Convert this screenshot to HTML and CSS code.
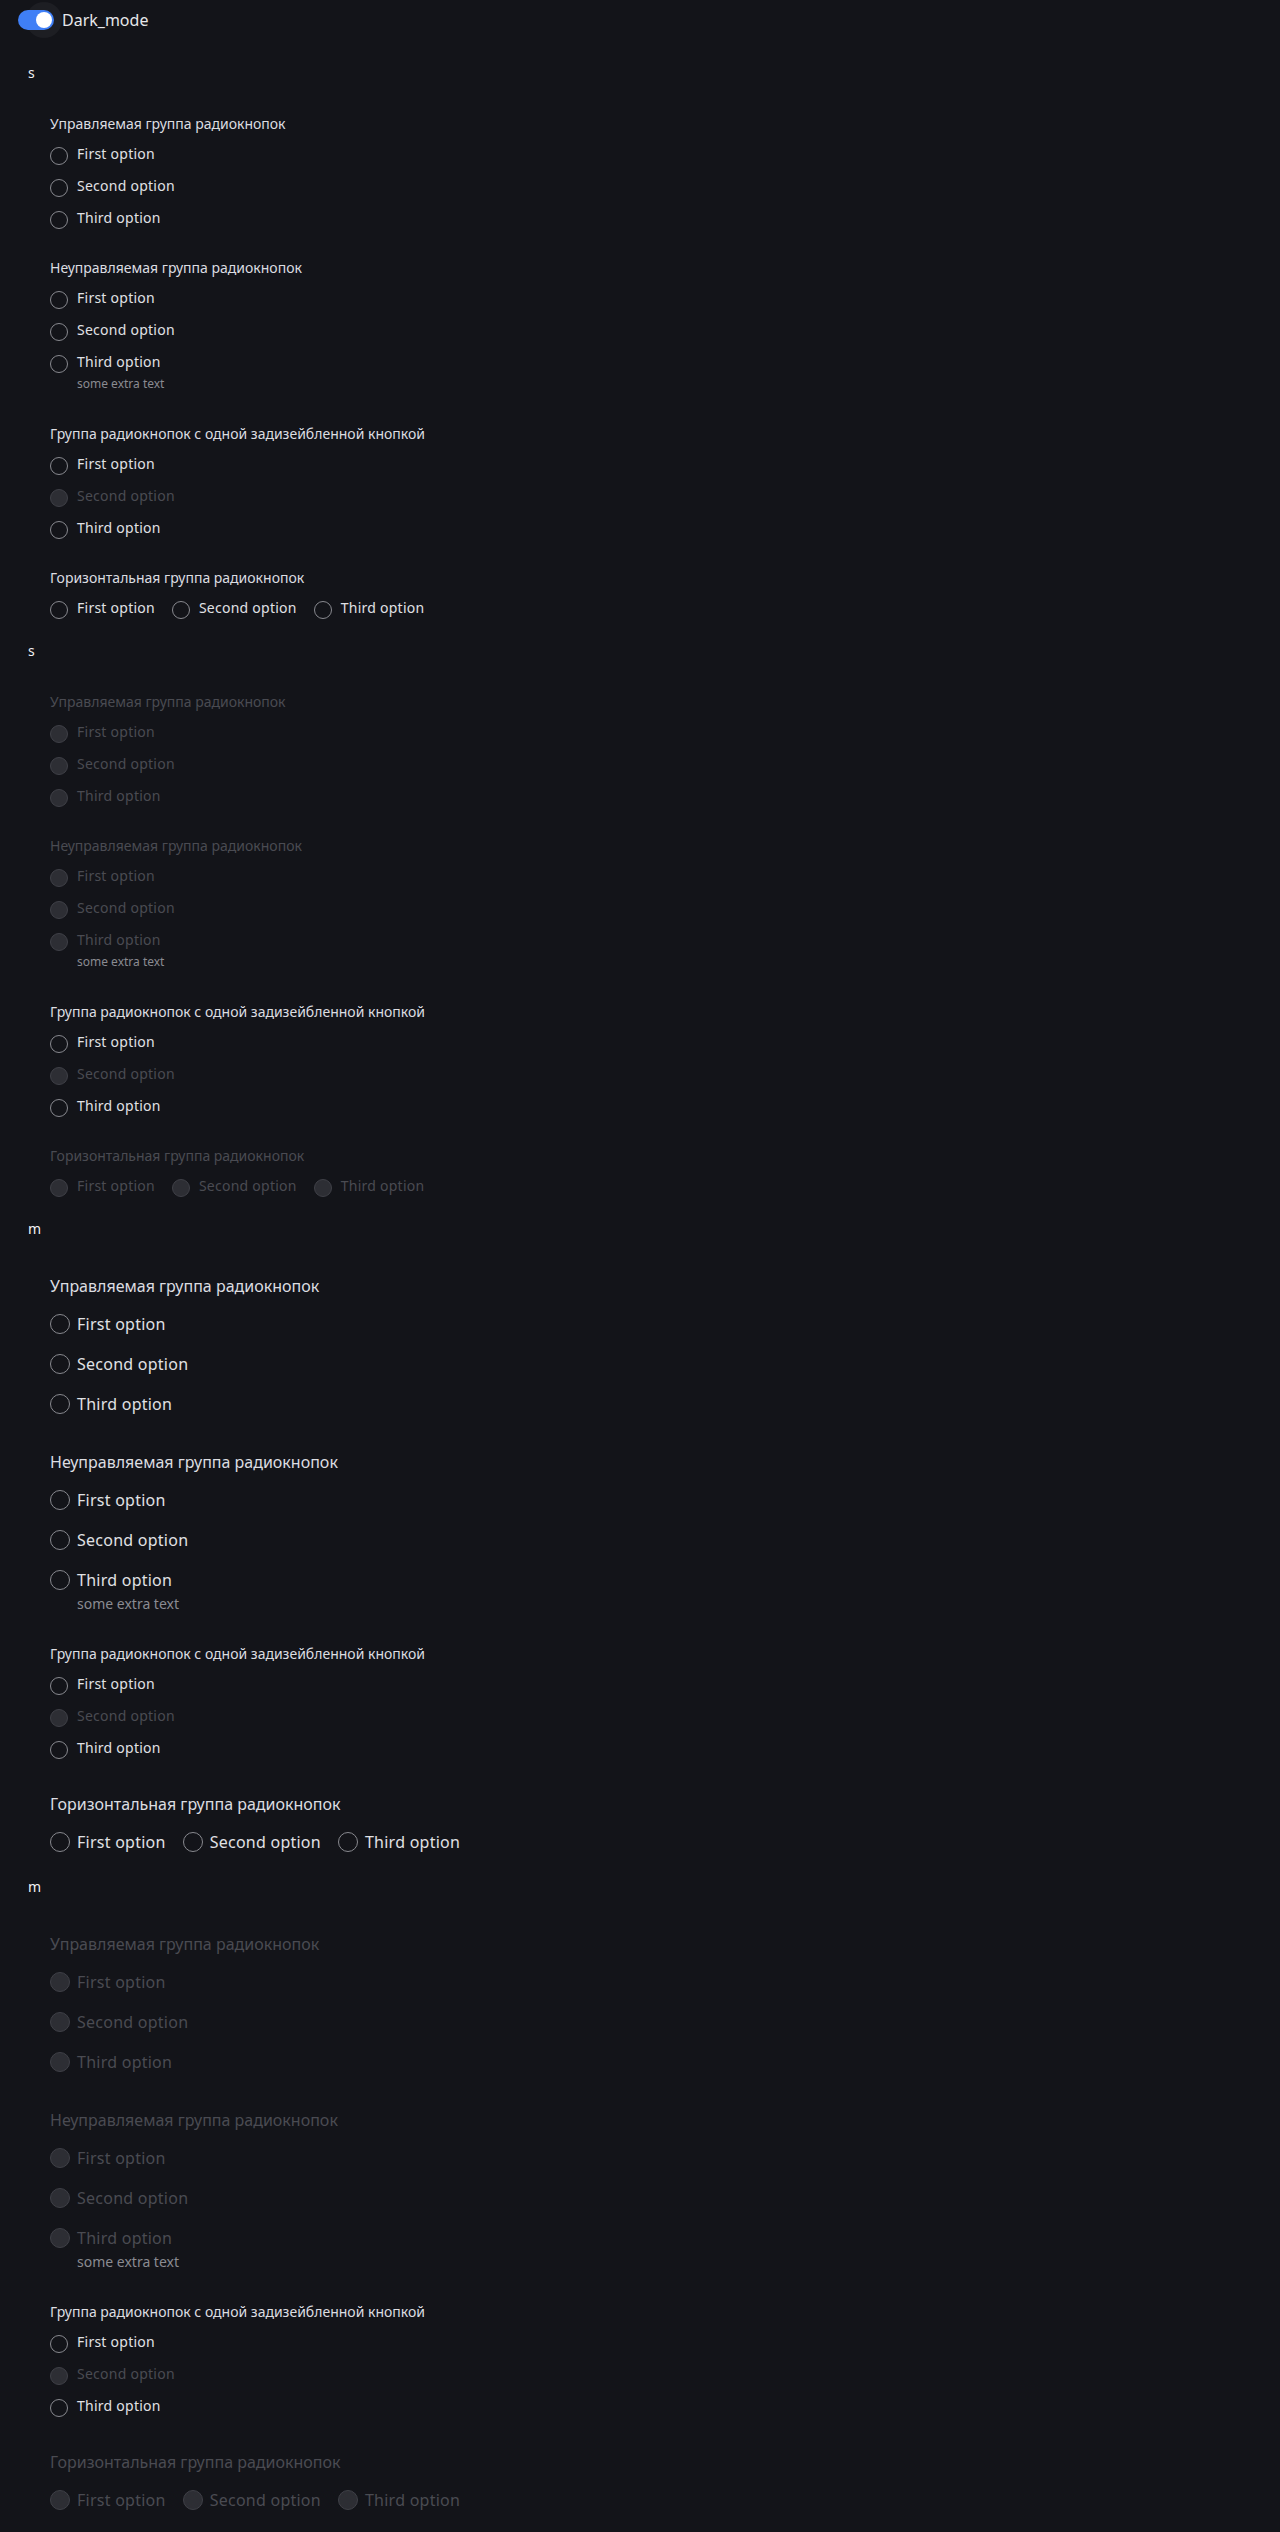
FILE: index.html
```html
<!DOCTYPE html>
<html lang="ru">
<head>
<meta charset="utf-8">
<title>Radio groups</title>
<link rel="stylesheet" href="styles.css">
</head>
<body>
<div class="toggle-row">
  <span class="switch"><span class="halo"></span><span class="track"></span><span class="knob"></span></span>
  <span class="switch-label">Dark_mode</span>
</div>

<!-- s, enabled -->
<section class="section size-s">
  <div class="section-title">s</div>
  <div class="group">
    <div class="group-label">Управляемая группа радиокнопок</div>
    <div class="options">
      <div class="option"><span class="radio"></span><div class="opt-body"><div class="opt-text">First option</div></div></div>
      <div class="option"><span class="radio"></span><div class="opt-body"><div class="opt-text">Second option</div></div></div>
      <div class="option"><span class="radio"></span><div class="opt-body"><div class="opt-text">Third option</div></div></div>
    </div>
  </div>
  <div class="group">
    <div class="group-label">Неуправляемая группа радиокнопок</div>
    <div class="options">
      <div class="option"><span class="radio"></span><div class="opt-body"><div class="opt-text">First option</div></div></div>
      <div class="option"><span class="radio"></span><div class="opt-body"><div class="opt-text">Second option</div></div></div>
      <div class="option"><span class="radio"></span><div class="opt-body"><div class="opt-text">Third option</div><div class="extra">some extra text</div></div></div>
    </div>
  </div>
  <div class="group">
    <div class="group-label">Группа радиокнопок с одной задизейбленной кнопкой</div>
    <div class="options">
      <div class="option"><span class="radio"></span><div class="opt-body"><div class="opt-text">First option</div></div></div>
      <div class="option disabled"><span class="radio"></span><div class="opt-body"><div class="opt-text">Second option</div></div></div>
      <div class="option"><span class="radio"></span><div class="opt-body"><div class="opt-text">Third option</div></div></div>
    </div>
  </div>
  <div class="group">
    <div class="group-label">Горизонтальная группа радиокнопок</div>
    <div class="options horizontal">
      <div class="option"><span class="radio"></span><div class="opt-body"><div class="opt-text">First option</div></div></div>
      <div class="option"><span class="radio"></span><div class="opt-body"><div class="opt-text">Second option</div></div></div>
      <div class="option"><span class="radio"></span><div class="opt-body"><div class="opt-text">Third option</div></div></div>
    </div>
  </div>
</section>

<!-- s, disabled -->
<section class="section size-s">
  <div class="section-title">s</div>
  <div class="group is-disabled">
    <div class="group-label">Управляемая группа радиокнопок</div>
    <div class="options">
      <div class="option disabled"><span class="radio"></span><div class="opt-body"><div class="opt-text">First option</div></div></div>
      <div class="option disabled"><span class="radio"></span><div class="opt-body"><div class="opt-text">Second option</div></div></div>
      <div class="option disabled"><span class="radio"></span><div class="opt-body"><div class="opt-text">Third option</div></div></div>
    </div>
  </div>
  <div class="group is-disabled">
    <div class="group-label">Неуправляемая группа радиокнопок</div>
    <div class="options">
      <div class="option disabled"><span class="radio"></span><div class="opt-body"><div class="opt-text">First option</div></div></div>
      <div class="option disabled"><span class="radio"></span><div class="opt-body"><div class="opt-text">Second option</div></div></div>
      <div class="option disabled"><span class="radio"></span><div class="opt-body"><div class="opt-text">Third option</div><div class="extra">some extra text</div></div></div>
    </div>
  </div>
  <div class="group">
    <div class="group-label">Группа радиокнопок с одной задизейбленной кнопкой</div>
    <div class="options">
      <div class="option"><span class="radio"></span><div class="opt-body"><div class="opt-text">First option</div></div></div>
      <div class="option disabled"><span class="radio"></span><div class="opt-body"><div class="opt-text">Second option</div></div></div>
      <div class="option"><span class="radio"></span><div class="opt-body"><div class="opt-text">Third option</div></div></div>
    </div>
  </div>
  <div class="group is-disabled">
    <div class="group-label">Горизонтальная группа радиокнопок</div>
    <div class="options horizontal">
      <div class="option disabled"><span class="radio"></span><div class="opt-body"><div class="opt-text">First option</div></div></div>
      <div class="option disabled"><span class="radio"></span><div class="opt-body"><div class="opt-text">Second option</div></div></div>
      <div class="option disabled"><span class="radio"></span><div class="opt-body"><div class="opt-text">Third option</div></div></div>
    </div>
  </div>
</section>

<!-- m, enabled -->
<section class="section size-m">
  <div class="section-title">m</div>
  <div class="group">
    <div class="group-label">Управляемая группа радиокнопок</div>
    <div class="options">
      <div class="option"><span class="radio"></span><div class="opt-body"><div class="opt-text">First option</div></div></div>
      <div class="option"><span class="radio"></span><div class="opt-body"><div class="opt-text">Second option</div></div></div>
      <div class="option"><span class="radio"></span><div class="opt-body"><div class="opt-text">Third option</div></div></div>
    </div>
  </div>
  <div class="group">
    <div class="group-label">Неуправляемая группа радиокнопок</div>
    <div class="options">
      <div class="option"><span class="radio"></span><div class="opt-body"><div class="opt-text">First option</div></div></div>
      <div class="option"><span class="radio"></span><div class="opt-body"><div class="opt-text">Second option</div></div></div>
      <div class="option"><span class="radio"></span><div class="opt-body"><div class="opt-text">Third option</div><div class="extra">some extra text</div></div></div>
    </div>
  </div>
  <div class="group group-small">
    <div class="group-label">Группа радиокнопок с одной задизейбленной кнопкой</div>
    <div class="options">
      <div class="option"><span class="radio"></span><div class="opt-body"><div class="opt-text">First option</div></div></div>
      <div class="option disabled"><span class="radio"></span><div class="opt-body"><div class="opt-text">Second option</div></div></div>
      <div class="option"><span class="radio"></span><div class="opt-body"><div class="opt-text">Third option</div></div></div>
    </div>
  </div>
  <div class="group">
    <div class="group-label">Горизонтальная группа радиокнопок</div>
    <div class="options horizontal">
      <div class="option"><span class="radio"></span><div class="opt-body"><div class="opt-text">First option</div></div></div>
      <div class="option"><span class="radio"></span><div class="opt-body"><div class="opt-text">Second option</div></div></div>
      <div class="option"><span class="radio"></span><div class="opt-body"><div class="opt-text">Third option</div></div></div>
    </div>
  </div>
</section>

<!-- m, disabled -->
<section class="section size-m">
  <div class="section-title">m</div>
  <div class="group is-disabled">
    <div class="group-label">Управляемая группа радиокнопок</div>
    <div class="options">
      <div class="option disabled"><span class="radio"></span><div class="opt-body"><div class="opt-text">First option</div></div></div>
      <div class="option disabled"><span class="radio"></span><div class="opt-body"><div class="opt-text">Second option</div></div></div>
      <div class="option disabled"><span class="radio"></span><div class="opt-body"><div class="opt-text">Third option</div></div></div>
    </div>
  </div>
  <div class="group is-disabled">
    <div class="group-label">Неуправляемая группа радиокнопок</div>
    <div class="options">
      <div class="option disabled"><span class="radio"></span><div class="opt-body"><div class="opt-text">First option</div></div></div>
      <div class="option disabled"><span class="radio"></span><div class="opt-body"><div class="opt-text">Second option</div></div></div>
      <div class="option disabled"><span class="radio"></span><div class="opt-body"><div class="opt-text">Third option</div><div class="extra">some extra text</div></div></div>
    </div>
  </div>
  <div class="group group-small">
    <div class="group-label">Группа радиокнопок с одной задизейбленной кнопкой</div>
    <div class="options">
      <div class="option"><span class="radio"></span><div class="opt-body"><div class="opt-text">First option</div></div></div>
      <div class="option disabled"><span class="radio"></span><div class="opt-body"><div class="opt-text">Second option</div></div></div>
      <div class="option"><span class="radio"></span><div class="opt-body"><div class="opt-text">Third option</div></div></div>
    </div>
  </div>
  <div class="group is-disabled">
    <div class="group-label">Горизонтальная группа радиокнопок</div>
    <div class="options horizontal">
      <div class="option disabled"><span class="radio"></span><div class="opt-body"><div class="opt-text">First option</div></div></div>
      <div class="option disabled"><span class="radio"></span><div class="opt-body"><div class="opt-text">Second option</div></div></div>
      <div class="option disabled"><span class="radio"></span><div class="opt-body"><div class="opt-text">Third option</div></div></div>
    </div>
  </div>
</section>
</body>
</html>
```
FILE: styles.css
```css
html, body {
  margin: 0;
  padding: 0;
  background: #131419;
}
body {
  font-family: "Noto Sans", "Open Sans", sans-serif;
  color: #e4e5e9;
  min-height: 2532px;
}

/* toggle */
.toggle-row {
  height: 40px;
  display: flex;
  align-items: center;
  padding-left: 18px;
}
.switch {
  position: relative;
  width: 36px;
  height: 20px;
  margin-right: 8px;
}
.switch .halo {
  position: absolute;
  width: 36px;
  height: 36px;
  left: 8px;
  top: -8px;
  border-radius: 50%;
  background: #1d1e23;
}
.switch .track {
  position: absolute;
  inset: 0;
  border-radius: 10px;
  background: #3f7ff6;
}
.switch .knob {
  position: absolute;
  width: 16px;
  height: 16px;
  left: 18px;
  top: 2px;
  border-radius: 50%;
  background: #ffffff;
}
.switch-label {
  font-size: 16px;
  line-height: 24px;
  color: #e6e7ea;
}

/* sections */
.section {
  padding-top: 23px;
}
.section-title {
  padding-left: 28px;
  font-size: 14px;
  line-height: 20px;
  color: #f0f1f3;
}
.group {
  padding-left: 50px;
}
.group-label {
  color: #dcdde1;
}
.options {
  display: flex;
  flex-direction: column;
}
.options.horizontal {
  flex-direction: row;
}
.option {
  display: flex;
  align-items: flex-start;
}
.radio {
  flex: none;
  box-sizing: border-box;
  border-radius: 50%;
  border: 1px solid #88898f;
}
.opt-text {
  color: #e0e1e5;
}
.extra {
  color: #8a8b91;
}

/* disabled */
.option.disabled .radio {
  background: #2d2e34;
  border-color: #3f4047;
}
.option.disabled .opt-text {
  color: #4a4b52;
}
.group.is-disabled .group-label {
  color: #4a4b52;
}

/* size s (also used by small groups inside m) */
.size-s .section-title {
  margin-bottom: 31px;
}
.size-s .group + .group {
  margin-top: 30px;
}
.size-s .group-label,
.size-m .group-small .group-label {
  font-size: 14px;
  line-height: 20px;
  margin-bottom: 10px;
}
.size-s .options,
.size-m .group-small .options {
  gap: 12px;
}
.size-s .opt-text,
.size-m .group-small .opt-text {
  font-size: 14px;
  line-height: 20px;
  letter-spacing: 0.25px;
}
.size-s .radio,
.size-m .group-small .radio {
  width: 18px;
  height: 18px;
  margin: 2.5px 9px -0.5px 0;
}
.size-s .extra {
  font-size: 12px;
  line-height: 16px;
  margin-top: 4px;
  margin-bottom: 2px;
}
.size-s .options.horizontal {
  gap: 17px;
}

/* size m */
.size-m .section-title {
  margin-bottom: 35px;
}
.size-m .group + .group {
  margin-top: 34px;
}
.size-m .group-label {
  font-size: 16px;
  line-height: 24px;
  margin-bottom: 14px;
}
.size-m .options {
  gap: 16px;
}
.size-m .opt-text {
  font-size: 16px;
  line-height: 24px;
  letter-spacing: 0.25px;
}
.size-m .radio {
  width: 20px;
  height: 20px;
  margin: 2.2px 7px 0 0;
}
.size-m .extra {
  font-size: 14px;
  line-height: 20px;
  margin-top: 2px;
  margin-bottom: -4px;
}
.size-m .options.horizontal {
  gap: 17px;
}
```
